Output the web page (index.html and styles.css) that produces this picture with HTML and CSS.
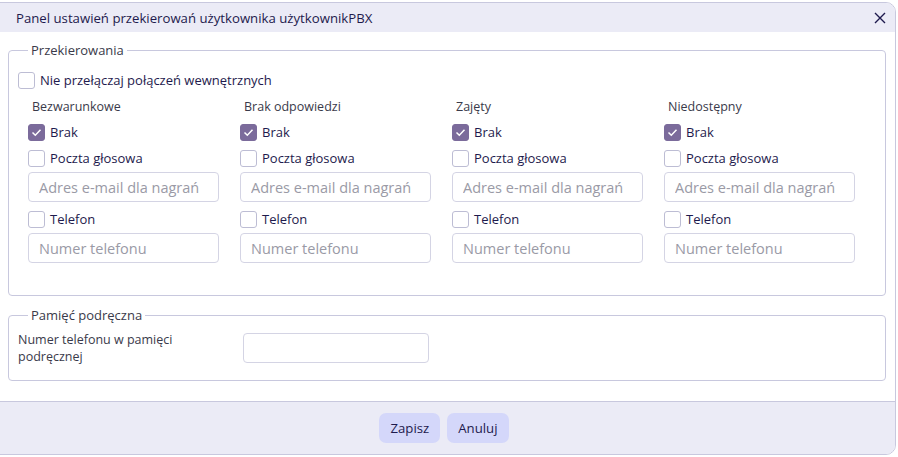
FILE: index.html
```html
<!doctype html>
<html lang="pl">
<head>
  <meta charset="UTF-8" />
  <title>Panel ustawień przekierowań</title>
  <link rel="stylesheet" href="styles.css">
</head>
<body>
  <div class="dialog">
    <div class="dialog-header">
      <span class="dialog-title">Panel ustawień przekierowań użytkownika użytkownikPBX</span>
      <button class="close-btn" aria-label="Zamknij">
        <svg width="12" height="12" viewBox="0 0 12 12"><path d="M1 1 L11 11 M11 1 L1 11" stroke="#1e1a4d" stroke-width="1.4" fill="none"/></svg>
      </button>
    </div>

    <div class="dialog-body">
      <fieldset class="group">
        <legend>Przekierowania</legend>
        <label class="check top-check"><input type="checkbox"> Nie przełączaj połączeń wewnętrznych</label>

        <div class="columns">
          <div class="col">
            <div class="col-title">Bezwarunkowe</div>
            <label class="check first"><input type="checkbox" checked> Brak</label>
            <label class="check"><input type="checkbox"> Poczta głosowa</label>
            <input type="text" class="field" placeholder="Adres e-mail dla nagrań">
            <label class="check"><input type="checkbox"> Telefon</label>
            <input type="text" class="field" placeholder="Numer telefonu">
          </div>
          <div class="col">
            <div class="col-title">Brak odpowiedzi</div>
            <label class="check first"><input type="checkbox" checked> Brak</label>
            <label class="check"><input type="checkbox"> Poczta głosowa</label>
            <input type="text" class="field" placeholder="Adres e-mail dla nagrań">
            <label class="check"><input type="checkbox"> Telefon</label>
            <input type="text" class="field" placeholder="Numer telefonu">
          </div>
          <div class="col">
            <div class="col-title">Zajęty</div>
            <label class="check first"><input type="checkbox" checked> Brak</label>
            <label class="check"><input type="checkbox"> Poczta głosowa</label>
            <input type="text" class="field" placeholder="Adres e-mail dla nagrań">
            <label class="check"><input type="checkbox"> Telefon</label>
            <input type="text" class="field" placeholder="Numer telefonu">
          </div>
          <div class="col">
            <div class="col-title">Niedostępny</div>
            <label class="check first"><input type="checkbox" checked> Brak</label>
            <label class="check"><input type="checkbox"> Poczta głosowa</label>
            <input type="text" class="field" placeholder="Adres e-mail dla nagrań">
            <label class="check"><input type="checkbox"> Telefon</label>
            <input type="text" class="field" placeholder="Numer telefonu">
          </div>
        </div>
      </fieldset>

      <fieldset class="group cache">
        <legend>Pamięć podręczna</legend>
        <div class="cache-row">
          <label class="cache-label" for="cache-number">Numer telefonu w pamięci podręcznej</label>
          <input type="text" id="cache-number" class="field cache-field">
        </div>
      </fieldset>
    </div>

    <div class="dialog-footer">
      <button class="btn">Zapisz</button>
      <button class="btn">Anuluj</button>
    </div>
  </div>
</body>
</html>
```

FILE: styles.css
```css
body, html {
  margin: 0;
  padding: 0;
  background: #ffffff;
  font-family: 'Open Sans', sans-serif;
  color: #1e1a4d;
  overflow: hidden;
}
/* Dialog window */
.dialog {
  margin: 2px 2px 0 -2px;
  border: 1px solid #c8c8de;
  border-radius: 0 10px 10px 0;
  background: white;
  overflow: hidden;
}
.dialog-header {
  display: flex;
  align-items: center;
  justify-content: space-between;
  height: 29px;
  padding: 0 9px 0 17px;
  background: #ebebf6;
}
.dialog-title {
  font-size: 13.2px;
  color: #1e1a4d;
}
.close-btn {
  background: none;
  border: none;
  padding: 0;
  display: flex;
  cursor: pointer;
}
.dialog-body {
  padding: 9px 9px 20px 9px;
  display: flex;
  flex-direction: column;
  gap: 10px;
}
/* Fieldsets */
.group {
  margin: 0;
  border: 1px solid #c8c8de;
  border-radius: 4px;
  padding: 8px 9px 32px 9px;
}
.group legend {
  font-size: 13px;
  color: #3a3a4a;
  padding: 0 3px;
  margin-left: 10px;
}
.check {
  display: flex;
  align-items: center;
  gap: 5px;
  font-size: 13px;
  color: #1e1a4d;
  cursor: pointer;
}
.check input {
  appearance: none;
  width: 17px;
  height: 17px;
  margin: 0;
  border: 1px solid #bdbdd4;
  border-radius: 3px;
  background: white;
  flex-shrink: 0;
}
.check input:checked {
  background: #7b6b9b url("data:image/svg+xml,%3Csvg xmlns='http://www.w3.org/2000/svg' width='17' height='17'%3E%3Cpath d='M4.5 8.5 L7.3 11.2 L12.5 5.8' stroke='white' stroke-width='1.5' fill='none'/%3E%3C/svg%3E") center / 17px no-repeat;
  border-color: #7b6b9b;
}
.top-check {
  margin-top: 4px;
}
.columns {
  display: grid;
  grid-template-columns: repeat(4, 191px);
  column-gap: 21px;
  padding-left: 10px;
  margin-top: 9px;
}
.col {
  display: flex;
  flex-direction: column;
  align-items: flex-start;
}
.col-title {
  font-size: 12.5px;
  color: #3a3a4a;
  padding-left: 4px;
  margin-bottom: 8px;
}
.col .check {
  margin-bottom: 5px;
}
.col .check.first {
  margin-bottom: 8px;
}
.field {
  box-sizing: border-box;
  width: 191px;
  height: 30px;
  border: 1px solid #d4d4e4;
  border-radius: 4px;
  padding: 0 10px;
  font-family: inherit;
  font-size: 14.5px;
  margin-bottom: 8px;
}
.col .field:last-child {
  margin-bottom: 0;
}
.field::placeholder {
  color: #9a9aa6;
}
/* Cache section */
.cache {
  padding-bottom: 15px;
}
.cache-row {
  display: grid;
  grid-template-columns: 225px 186px;
  align-items: center;
  margin-top: -1px;
}
.cache-label {
  font-size: 12.5px;
  color: #3a3a4a;
  line-height: 17px;
  width: 190px;
}
.cache-field {
  width: 186px;
  margin: 0;
}
/* Footer */
.dialog-footer {
  display: flex;
  justify-content: center;
  gap: 7px;
  padding: 11px 6px 11px 0;
  background: #ebebf6;
  border-top: 1px solid #c8c8de;
}
.btn {
  height: 30px;
  padding: 0 11px;
  border: none;
  border-radius: 7px;
  background: #d4d7fa;
  color: #1e1a4d;
  font-family: inherit;
  font-size: 13.2px;
  cursor: pointer;
}
```
